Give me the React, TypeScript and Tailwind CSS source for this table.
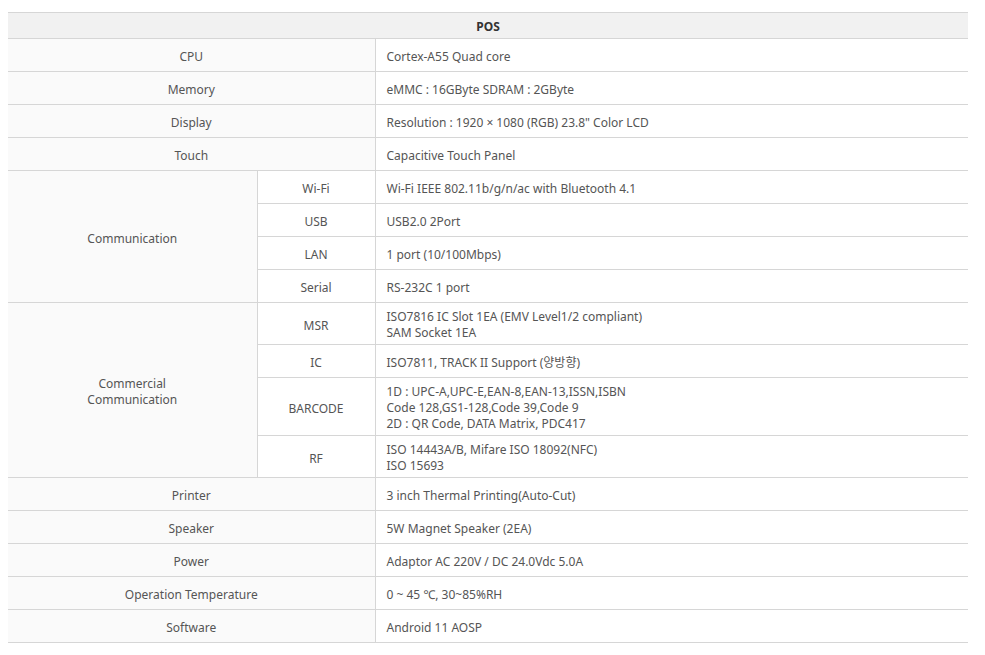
import React from "react";

const L = "bg-[#fafafa] text-center align-middle pt-[4px] border-b border-r border-[#d6d6d6]";
const S = "bg-white text-center align-middle pt-[4px] border-b border-r border-[#d6d6d6]";
const V1 = "bg-white text-left align-middle pl-[11px] pt-[4px] h-[33px] border-b border-[#d6d6d6]";
const VM = "bg-white text-left align-middle pl-[11px] pt-[6px] pb-[3px] border-b border-[#d6d6d6]";

function Lines({ items }: { items: string[] }) {
  return (
    <>
      {items.map((t, i) => (
        <div key={i}>{t}</div>
      ))}
    </>
  );
}

export default function App() {
  const simple = (label: string, value: string) => (
    <tr key={label}>
      <td colSpan={2} className={L}>{label}</td>
      <td className={V1}>{value}</td>
    </tr>
  );
  return (
    <div className="bg-white w-[985px] h-[655px] pt-[12px] pl-[8px]" style={{ fontFamily: '"Noto Sans", "Noto Sans CJK KR", sans-serif' }}>
      <table className="w-[960px] border-collapse text-[12px] leading-[16px] text-[#555] table-fixed">
        <colgroup>
          <col className="w-[249px]" />
          <col className="w-[118px]" />
          <col className="w-[593px]" />
        </colgroup>
        <tbody>
          <tr>
            <th colSpan={3} className="h-[26px] pt-[2px] bg-[#f1f1f1] border-t border-b border-[#d6d6d6] text-[#333] font-bold text-center align-middle">POS</th>
          </tr>
          {simple("CPU", "Cortex-A55 Quad core")}
          {simple("Memory", "eMMC : 16GByte SDRAM : 2GByte")}
          {simple("Display", "Resolution : 1920 × 1080 (RGB) 23.8\" Color LCD")}
          {simple("Touch", "Capacitive Touch Panel")}
          <tr>
            <td rowSpan={4} className={L}>Communication</td>
            <td className={S}>Wi-Fi</td>
            <td className={V1}>Wi-Fi IEEE 802.11b/g/n/ac with Bluetooth 4.1</td>
          </tr>
          <tr>
            <td className={S}>USB</td>
            <td className={V1}>USB2.0 2Port</td>
          </tr>
          <tr>
            <td className={S}>LAN</td>
            <td className={V1}>1 port (10/100Mbps)</td>
          </tr>
          <tr>
            <td className={S}>Serial</td>
            <td className={V1}>RS-232C 1 port</td>
          </tr>
          <tr>
            <td rowSpan={4} className={L}>
              <div>Commercial</div>
              <div>Communication</div>
            </td>
            <td className={S}>MSR</td>
            <td className={VM}><Lines items={["ISO7816 IC Slot 1EA (EMV Level1/2 compliant)", "SAM Socket 1EA"]} /></td>
          </tr>
          <tr>
            <td className={S}>IC</td>
            <td className={V1}>ISO7811, TRACK II Support (양방향)</td>
          </tr>
          <tr>
            <td className={S}>BARCODE</td>
            <td className={VM}><Lines items={["1D : UPC-A,UPC-E,EAN-8,EAN-13,ISSN,ISBN", "Code 128,GS1-128,Code 39,Code 9", "2D : QR Code, DATA Matrix, PDC417"]} /></td>
          </tr>
          <tr>
            <td className={S}>RF</td>
            <td className={VM}><Lines items={["ISO 14443A/B, Mifare ISO 18092(NFC)", "ISO 15693"]} /></td>
          </tr>
          {simple("Printer", "3 inch Thermal Printing(Auto-Cut)")}
          {simple("Speaker", "5W Magnet Speaker (2EA)")}
          {simple("Power", "Adaptor AC 220V / DC 24.0Vdc 5.0A")}
          {simple("Operation Temperature", "0 ~ 45 ℃, 30~85%RH")}
          {simple("Software", "Android 11 AOSP")}
        </tbody>
      </table>
    </div>
  );
}
